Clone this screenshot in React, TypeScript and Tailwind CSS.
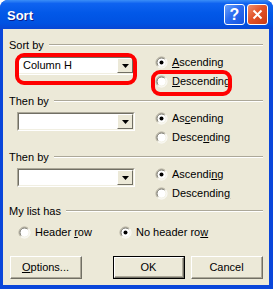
import React from 'react';

const Radio = ({ checked }: { checked?: boolean }) => (
  <svg width="13" height="13" viewBox="0 0 13 13" className="shrink-0">
    <circle cx="6.5" cy="6.5" r="5" fill="#fff" />
    <path d="M2.6 10.4 A5.5 5.5 0 0 1 10.4 2.6" fill="none" stroke="#ACA899" strokeWidth="1" />
    <path d="M10.4 2.6 A5.5 5.5 0 0 1 2.6 10.4" fill="none" stroke="#fff" strokeWidth="1" />
    <path d="M3.3 9.7 A4.5 4.5 0 0 1 9.7 3.3" fill="none" stroke="#716F64" strokeWidth="1" />
    <path d="M9.7 3.3 A4.5 4.5 0 0 1 3.3 9.7" fill="none" stroke="#F1EFE2" strokeWidth="1" />
    {checked && <circle cx="6.5" cy="6.5" r="2" fill="#000" />}
  </svg>
);

const RadioRow = ({ checked, children }: any) => (
  <div className="flex items-center h-[19px]">
    <Radio checked={checked} />
    <span className="ml-[4px] leading-none">{children}</span>
  </div>
);

const GroupHeader = ({ children }: any) => (
  <div className="flex items-center h-[12px] pl-[6px]">
    <span className="leading-none whitespace-nowrap">{children}</span>
    <div className="flex-1 ml-[5px] flex flex-col">
      <div className="h-px bg-[#ACA899]" />
      <div className="h-px bg-white" />
    </div>
  </div>
);

const Combo = ({ value }: { value?: string }) => (
  <div className="w-[118px] h-[19px] border-t border-l border-t-[#ACA899] border-l-[#ACA899] border-b border-r border-b-white border-r-white">
    <div className="h-full flex border-t border-l border-t-[#716F64] border-l-[#716F64] border-b border-r border-b-[#F1EFE2] border-r-[#F1EFE2] bg-white">
      <div className="flex-1 flex items-center pl-[4px] leading-none">{value}</div>
      <div className="w-[16px] h-full flex items-center justify-center bg-[#ECE9D8] border-t border-l border-t-white border-l-white border-b border-r border-b-[#716F64] border-r-[#716F64]">
        <svg width="7" height="4" viewBox="0 0 7 4"><path d="M0 0H7L3.5 4Z" fill="#000" /></svg>
      </div>
    </div>
  </div>
);

const SortGroup = ({ label, value, asc, desc }: any) => (
  <div className="h-[56px]">
    <GroupHeader>{label}</GroupHeader>
    <div className="flex pl-[14px]">
      <div className="mt-[5px]">
        <Combo value={value} />
      </div>
      <div className="ml-[20px] mt-[2px] flex flex-col">
        <RadioRow checked>{asc}</RadioRow>
        <RadioRow>{desc}</RadioRow>
      </div>
    </div>
  </div>
);

const Button = ({ children, isDefault }: any) => (
  <div className={`w-[72px] h-[23px] ${isDefault ? 'border border-black' : ''}`}>
    <div className="h-full border-t border-l border-t-white border-l-white border-b border-r border-b-[#716F64] border-r-[#716F64]">
      <div className="h-full flex items-center justify-center border-b border-r border-b-[#ACA899] border-r-[#ACA899] leading-none">
        {children}
      </div>
    </div>
  </div>
);

export default function App() {
  return (
    <div className="w-[273px] h-[289px] relative rounded-t-[8px] overflow-hidden bg-[#0A46DA] flex flex-col font-['Liberation_Sans',Arial,sans-serif] text-[11px] text-black">
      {/* Title bar */}
      <div className="h-[29px] flex items-center pl-[7px] pr-[5px] bg-[linear-gradient(to_bottom,#3B8EF7_0%,#0F63F0_12%,#0258E8_45%,#0052E2_80%,#0846D4_100%)]">
        <span className="text-white font-bold text-[13px] leading-none mt-[1px] [text-shadow:1px_1px_0_#0A1E8C]">Sort</span>
        <div className="ml-auto flex gap-[2px]">
          <div className="w-[21px] h-[21px] rounded-[3px] border border-white bg-[linear-gradient(135deg,#6CA2FA_0%,#2B6CF0_45%,#1553E0_100%)] flex items-center justify-center">
            <span className="text-white font-bold text-[16px] leading-none">?</span>
          </div>
          <div className="w-[21px] h-[21px] rounded-[3px] border border-white bg-[linear-gradient(135deg,#F0906E_0%,#E2532A_45%,#C93A12_100%)] flex items-center justify-center">
            <svg width="11" height="11" viewBox="0 0 11 11">
              <path d="M1.5 1.5L9.5 9.5M9.5 1.5L1.5 9.5" stroke="#fff" strokeWidth="2" />
            </svg>
          </div>
        </div>
      </div>

      {/* Body */}
      <div className="flex-1 ml-[3px] mr-[4px] mb-[4px] bg-[#ECE9D8] pr-[6px] pt-[10px] flex flex-col">
        <SortGroup label="Sort by" value="Column H" asc={<><u>A</u>scending</>} desc={<><u>D</u>escending</>} />
        <SortGroup label="Then by" asc={<>As<u>c</u>ending</>} desc={<>Desce<u>n</u>ding</>} />
        <SortGroup label="Then by" asc={<>Ascendi<u>n</u>g</>} desc={<>Descendin<u>g</u></>} />

        <div className="-mt-[2px]">
          <GroupHeader>My list has</GroupHeader>
          <div className="flex mt-[6px]">
            <div className="pl-[15px] w-[116px]">
              <RadioRow>Header <u>r</u>ow</RadioRow>
            </div>
            <RadioRow checked>No header ro<u>w</u></RadioRow>
          </div>
        </div>

        <div className="flex mt-[14px] pl-[7px]">
          <Button><u>O</u>ptions...</Button>
          <div className="ml-auto flex gap-[6px]">
            <Button isDefault>OK</Button>
            <Button>Cancel</Button>
          </div>
        </div>
      </div>

      {/* Red annotation marks */}
      <div className="absolute left-[15px] top-[53px] w-[122px] h-[32px] border-[4px] border-[#FF0000] rounded-[9px]" />
      <div className="absolute left-[151px] top-[70px] w-[81px] h-[26px] border-[4px] border-[#FF0000] rounded-[9px]" />
    </div>
  );
}
